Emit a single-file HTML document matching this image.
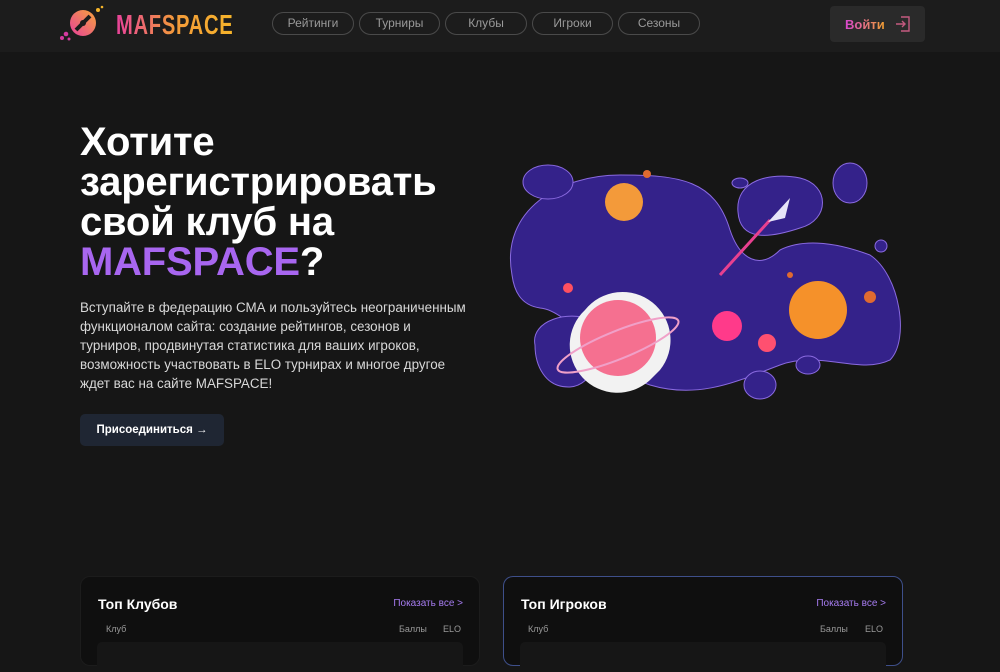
<!DOCTYPE html>
<html><head><meta charset="utf-8"><style>
*{margin:0;padding:0;box-sizing:border-box}
body{width:1000px;height:653px;overflow:hidden;background:#161616;font-family:"Liberation Sans",sans-serif;color:#fff;position:relative}
.hdr{position:absolute;left:0;top:0;width:1000px;height:52px;background:#1c1c1c}
.logo{position:absolute;left:116px;top:9px;font-size:28px;font-weight:bold;letter-spacing:1px;background:linear-gradient(90deg,#e8429a,#f39a3a,#f6b52a);-webkit-background-clip:text;color:transparent;transform:scaleX(.72);transform-origin:left;white-space:nowrap}
.nav{position:absolute;top:12px;height:23px;border:1px solid #4a4a4a;border-radius:12px;font-size:12px;color:#9a9a9a;text-align:center;line-height:21px}
.login{position:absolute;left:830px;top:6px;width:95px;height:36px;background:#2a2a2a;border-radius:4px}
.login span{position:absolute;left:15px;top:11px;font-size:13px;font-weight:bold;background:linear-gradient(90deg,#d846d0,#f0a030);-webkit-background-clip:text;color:transparent}
h1{position:absolute;left:80px;top:122px;font-size:40px;line-height:40px;font-weight:bold;letter-spacing:-.2px;white-space:nowrap}
h1 b{color:#a866f0}
p.d{position:absolute;left:80px;top:298px;width:420px;font-size:13.4px;line-height:19px;color:#d8d8d8;white-space:nowrap}
.btn{position:absolute;left:80px;top:414px;width:144px;height:32px;background:#1f2633;border-radius:5px;font-size:11.5px;font-weight:bold;line-height:32px;text-align:center}
.card{position:absolute;top:576px;width:400px;height:90px;background:#0f0f0f;border-radius:10px;border:1px solid #1c1c1c}
.card h3{position:absolute;left:17px;top:19px;font-size:14px}
.card .sa{position:absolute;right:16px;top:21px;font-size:10px;color:#a67cf0}
.card .c{position:absolute;top:47px;font-size:9px;color:#999}
.card .row{position:absolute;left:16px;right:16px;top:65px;height:30px;background:#161616;border-radius:5px}
</style></head><body>
<div class="hdr">
<svg style="position:absolute;left:58px;top:4px" width="50" height="40" viewBox="0 0 50 40">
<defs><linearGradient id="lg" x1="0" y1="1" x2="1" y2="0"><stop offset="0" stop-color="#e8409a"/><stop offset="1" stop-color="#f6a43a"/></linearGradient></defs>
<circle cx="25" cy="19" r="13" fill="url(#lg)"/><path d="M18 26 L32 12" stroke="#1c1c1c" stroke-width="4"/><circle cx="25" cy="19" r="3" fill="#1c1c1c"/>
<circle cx="40" cy="6" r="2" fill="#f6b52a"/><circle cx="44" cy="3" r="1.3" fill="#f6b52a"/><circle cx="8" cy="30" r="2.3" fill="#d43aa0"/><circle cx="4" cy="34" r="2" fill="#d43aa0"/><circle cx="11" cy="35" r="1.5" fill="#d43aa0"/></svg>
<div class="logo">MAFSPACE</div>
<div class="nav" style="left:272px;width:82px">Рейтинги</div>
<div class="nav" style="left:359px;width:81px">Турниры</div>
<div class="nav" style="left:445px;width:82px">Клубы</div>
<div class="nav" style="left:532px;width:81px">Игроки</div>
<div class="nav" style="left:618px;width:82px">Сезоны</div>
<div class="login"><span>Войти</span>
<svg style="position:absolute;left:64px;top:9px" width="18" height="18" viewBox="0 0 18 18" fill="none" stroke="#c45a80" stroke-width="1.4"><path d="M7 2h8v14H7M2 9h9M8 6l3 3-3 3"/></svg></div>
</div>
<h1>Хотите<br>зарегистрировать<br>свой клуб на<br><b>MAFSPACE</b>?</h1>
<p class="d">Вступайте в федерацию СМА и пользуйтесь неограниченным<br>функционалом сайта: создание рейтингов, сезонов и<br>турниров, продвинутая статистика для ваших игроков,<br>возможность участвовать в ELO турнирах и многое другое<br>ждет вас на сайте MAFSPACE!</p>
<div class="btn">Присоединиться →</div>
<svg style="position:absolute;left:500px;top:150px" width="410" height="260" viewBox="0 0 410 260">
<g fill="#34228a" stroke="#8a6ae0" stroke-width="1">
<path d="M12 125 C0 60 60 25 120 25 C180 25 215 30 230 80 C240 110 260 120 280 100 C300 90 330 90 370 105 C400 125 410 190 390 210 C360 225 320 200 280 215 C240 230 200 250 150 235 C110 222 70 160 40 158 C20 155 14 140 12 125Z"/>
<path d="M238 62 C235 30 270 22 300 28 C330 35 330 70 300 78 C270 88 240 92 238 62Z"/>
<path d="M35 195 C30 170 70 160 90 170 C110 180 100 235 70 237 C45 238 35 215 35 195Z"/>
<ellipse cx="48" cy="32" rx="25" ry="17"/><ellipse cx="350" cy="33" rx="17" ry="20"/><ellipse cx="260" cy="235" rx="16" ry="14"/><ellipse cx="308" cy="215" rx="12" ry="9"/><ellipse cx="240" cy="33" rx="8" ry="5"/><circle cx="381" cy="96" r="6"/>
</g>
<path d="M270 70 L220 125" stroke="#e8408f" stroke-width="3"/><path d="M268 72 L290 48 L285 68Z" fill="#e6e4f8"/>
<circle cx="124" cy="52" r="19" fill="#f39a3a"/><circle cx="147" cy="24" r="4" fill="#e06a30"/>
<circle cx="318" cy="160" r="29" fill="#f5912a"/><circle cx="370" cy="147" r="6" fill="#e06a30"/><circle cx="290" cy="125" r="3" fill="#e06a30"/>
<circle cx="227" cy="176" r="15" fill="#ff3a8a"/><circle cx="267" cy="193" r="9" fill="#ff5070"/><circle cx="68" cy="138" r="5" fill="#ff5060"/>
<path d="M85 160 A38 38 0 0 1 160 220 L150 230 A40 40 0 0 1 85 160Z" fill="#f2f2f2"/>
<circle cx="118" cy="188" r="38" fill="#f57090"/>
<ellipse cx="118" cy="195" rx="65" ry="14" transform="rotate(-22 118 195)" fill="none" stroke="#f0a0c8" stroke-width="2"/>
</svg>
<div class="card" style="left:80px"><h3>Топ Клубов</h3><span class="sa">Показать все &gt;</span><span class="c" style="left:25px">Клуб</span><span class="c" style="left:318px">Баллы</span><span class="c" style="left:362px">ELO</span><div class="row"></div></div>
<div class="card" style="left:503px;border-color:#3e4f8a"><h3>Топ Игроков</h3><span class="sa">Показать все &gt;</span><span class="c" style="left:24px">Клуб</span><span class="c" style="left:316px">Баллы</span><span class="c" style="left:361px">ELO</span><div class="row"></div></div>
</body></html>
